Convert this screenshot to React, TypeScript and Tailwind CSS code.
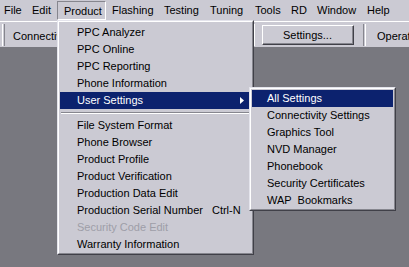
import { ReactNode } from "react";

const menuBar = [
  { label: "File", w: "w-[28px]", pl: "pl-[4px]" },
  { label: "Edit", w: "w-[29px]", pl: "pl-[4px]" },
  { label: "Product", w: "w-[49px]", pl: "pl-[6px]", open: true },
  { label: "Flashing", w: "w-[52px]", pl: "pl-[6px]" },
  { label: "Testing", w: "w-[46px]", pl: "pl-[6px]" },
  { label: "Tuning", w: "w-[45px]", pl: "pl-[6px]" },
  { label: "Tools", w: "w-[36px]", pl: "pl-[6px]" },
  { label: "RD", w: "w-[26px]", pl: "pl-[6px]" },
  { label: "Window", w: "w-[50px]", pl: "pl-[6px]" },
  { label: "Help", w: "w-[34px]", pl: "pl-[6px]" },
];

type Item = { label: string; shortcut?: string; sub?: boolean; active?: boolean; disabled?: boolean } | "sep";

const productItems: Item[] = [
  { label: "PPC Analyzer" },
  { label: "PPC Online" },
  { label: "PPC Reporting" },
  { label: "Phone Information" },
  { label: "User Settings", sub: true, active: true },
  "sep",
  { label: "File System Format" },
  { label: "Phone Browser" },
  { label: "Product Profile" },
  { label: "Product Verification" },
  { label: "Production Data Edit" },
  { label: "Production Serial Number", shortcut: "Ctrl-N" },
  { label: "Security Code Edit", disabled: true },
  { label: "Warranty Information" },
];

const settingsItems: Item[] = [
  { label: "All Settings", active: true },
  { label: "Connectivity Settings" },
  { label: "Graphics Tool" },
  { label: "NVD Manager" },
  { label: "Phonebook" },
  { label: "Security Certificates" },
  { label: "WAP  Bookmarks" },
];

function Raised({ className, children }: { className: string; children: ReactNode }) {
  return (
    <div className={`border border-t-[#e4e4ec] border-l-[#e4e4ec] border-r-[#404048] border-b-[#404048] ${className}`}>
      <div className="h-full border border-t-white border-l-white border-r-[#86868e] border-b-[#86868e] bg-[#cbcad3] p-[1px]">
        {children}
      </div>
    </div>
  );
}

function MenuRows({ items, pl }: { items: Item[]; pl: string }) {
  return (
    <div className="flex flex-col">
      {items.map((it, i) =>
        it === "sep" ? (
          <div key={i} className="flex flex-col justify-center h-[8px] px-[1px]">
            <div className="h-[1px] bg-[#86868e]" />
            <div className="h-[1px] bg-white" />
          </div>
        ) : (
          <div
            key={i}
            className={`flex items-center h-[17px] ${pl} pr-[6px] ${
              it.active ? "bg-[#0c226e] text-white" : it.disabled ? "text-[#9e9ea8]" : "text-black"
            }`}
          >
            <span className="whitespace-pre">{it.label}</span>
            {it.shortcut && <span className="ml-[9px]">{it.shortcut}</span>}
            {it.sub && (
              <svg className="ml-auto mr-[1px]" width="4" height="7" viewBox="0 0 4 7">
                <path d="M0 0 L4 3.5 L0 7 Z" fill="white" />
              </svg>
            )}
          </div>
        )
      )}
    </div>
  );
}

export default function App() {
  return (
    <div
      className="relative w-[409px] h-[267px] overflow-hidden bg-[#78787f] text-[11px] leading-none text-black"
      style={{ fontFamily: '"Liberation Sans", Arial, sans-serif' }}
    >
      {/* menu bar */}
      <div className="flex h-[21px] bg-[#cbcad3] pt-[1px]">
        {menuBar.map((m) => (
          <div
            key={m.label}
            className={`${m.w} ${m.pl} shrink-0 flex items-center h-[19px] ${
              m.open ? "border border-t-[#86868e] border-l-[#86868e] border-r-white border-b-white pl-[6px] pt-[1px]" : ""
            }`}
          >
            {m.label}
          </div>
        ))}
      </div>

      {/* toolbar */}
      <div className="flex items-stretch h-[26px] bg-[#cbcad3] border-t border-t-white pt-[2px] pb-[1px]">
        <div className="flex items-stretch w-[254px] shrink-0">
          <div className="ml-[2px] w-[3px] border-l border-l-white border-r border-r-[#86868e]" />
          <div className="flex items-center pl-[8px] pt-[3px]">Connectivity...</div>
        </div>
        <div className="flex items-stretch shrink-0 border-l border-l-white">
          <div className="ml-[7px] mt-[1px] mb-[1px] w-[92px] shrink-0 border border-t-white border-l-white border-r-[#404048] border-b-[#404048]">
            <div className="h-full flex items-center justify-center pt-[2px] border-r border-b border-r-[#86868e] border-b-[#86868e]">
              Settings...
            </div>
          </div>
          <div className="ml-[9px] w-[3px] shrink-0 border-l border-l-[#86868e] border-r border-r-white" />
          <div className="flex items-center pl-[11px] pt-[3px] whitespace-nowrap">Operations</div>
        </div>
      </div>

      {/* Product menu */}
      <Raised className="absolute left-[57px] top-[20px] w-[197px] h-[235px]">
        <div className="pt-[1px]">
          <MenuRows items={productItems} pl="pl-[17px]" />
        </div>
      </Raised>

      {/* User Settings submenu */}
      <Raised className="absolute left-[249px] top-[87px] w-[147px] h-[124px]">
        <MenuRows items={settingsItems} pl="pl-[15px]" />
      </Raised>
    </div>
  );
}
